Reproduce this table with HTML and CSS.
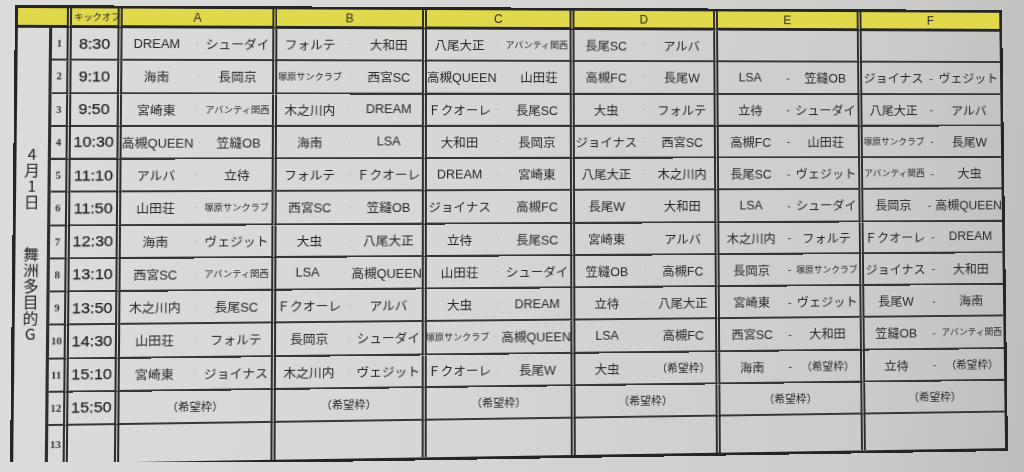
FILE: index.html
```html
<!DOCTYPE html>
<html lang="ja">
<head>
<meta charset="utf-8">
<title>試合スケジュール</title>
<link rel="stylesheet" href="styles.css">
</head>
<body>
<div class="sheet">
  <div class="c hd blank"></div>
  <div class="c hd ko">キックオフ</div>
  <div class="c hd">A</div>
  <div class="c hd">B</div>
  <div class="c hd">C</div>
  <div class="c hd">D</div>
  <div class="c hd">E</div>
  <div class="c hd f">F</div>

  <div class="c date"><span class="v">4月1日</span><span class="v">舞洲多目的G</span></div>

  <div class="c no">1</div><div class="c t">8:30</div>
  <div class="c m"><span>DREAM</span><i>·</i><span>シューダイ</span></div>
  <div class="c m"><span>フォルテ</span><i>·</i><span>大和田</span></div>
  <div class="c m"><span>八尾大正</span><i>·</i><span class="s">アバンティ関西</span></div>
  <div class="c m"><span>長尾SC</span><i>·</i><span>アルバ</span></div>
  <div class="c m e"></div>
  <div class="c m e f"></div>

  <div class="c no">2</div><div class="c t">9:10</div>
  <div class="c m"><span>海南</span><i>·</i><span>長岡京</span></div>
  <div class="c m"><span class="s">塚原サンクラブ</span><i>·</i><span>西宮SC</span></div>
  <div class="c m"><span>高槻QUEEN</span><i>·</i><span>山田荘</span></div>
  <div class="c m"><span>高槻FC</span><i>·</i><span>長尾W</span></div>
  <div class="c m e"><span>LSA</span><i>-</i><span>笠縫OB</span></div>
  <div class="c m e f"><span>ジョイナス</span><i>-</i><span>ヴェジット</span></div>

  <div class="c no">3</div><div class="c t">9:50</div>
  <div class="c m"><span>宮崎東</span><i>·</i><span class="s">アバンティ関西</span></div>
  <div class="c m"><span>木之川内</span><i>·</i><span>DREAM</span></div>
  <div class="c m"><span>Ｆクオーレ</span><i>·</i><span>長尾SC</span></div>
  <div class="c m"><span>大虫</span><i>·</i><span>フォルテ</span></div>
  <div class="c m e"><span>立待</span><i>-</i><span>シューダイ</span></div>
  <div class="c m e f"><span>八尾大正</span><i>-</i><span>アルバ</span></div>

  <div class="c no">4</div><div class="c t">10:30</div>
  <div class="c m"><span>高槻QUEEN</span><i>·</i><span>笠縫OB</span></div>
  <div class="c m"><span>海南</span><i>·</i><span>LSA</span></div>
  <div class="c m"><span>大和田</span><i>·</i><span>長岡京</span></div>
  <div class="c m"><span>ジョイナス</span><i>·</i><span>西宮SC</span></div>
  <div class="c m e"><span>高槻FC</span><i>-</i><span>山田荘</span></div>
  <div class="c m e f"><span class="s">塚原サンクラブ</span><i>-</i><span>長尾W</span></div>

  <div class="c no">5</div><div class="c t">11:10</div>
  <div class="c m"><span>アルバ</span><i>·</i><span>立待</span></div>
  <div class="c m"><span>フォルテ</span><i>·</i><span>Ｆクオーレ</span></div>
  <div class="c m"><span>DREAM</span><i>·</i><span>宮崎東</span></div>
  <div class="c m"><span>八尾大正</span><i>·</i><span>木之川内</span></div>
  <div class="c m e"><span>長尾SC</span><i>-</i><span>ヴェジット</span></div>
  <div class="c m e f"><span class="s">アバンティ関西</span><i>-</i><span>大虫</span></div>

  <div class="c no">6</div><div class="c t">11:50</div>
  <div class="c m"><span>山田荘</span><i>·</i><span class="s">塚原サンクラブ</span></div>
  <div class="c m"><span>西宮SC</span><i>·</i><span>笠縫OB</span></div>
  <div class="c m"><span>ジョイナス</span><i>·</i><span>高槻FC</span></div>
  <div class="c m"><span>長尾W</span><i>·</i><span>大和田</span></div>
  <div class="c m e"><span>LSA</span><i>-</i><span>シューダイ</span></div>
  <div class="c m e f"><span>長岡京</span><i>-</i><span>高槻QUEEN</span></div>

  <div class="c no">7</div><div class="c t">12:30</div>
  <div class="c m"><span>海南</span><i>·</i><span>ヴェジット</span></div>
  <div class="c m"><span>大虫</span><i>·</i><span>八尾大正</span></div>
  <div class="c m"><span>立待</span><i>·</i><span>長尾SC</span></div>
  <div class="c m"><span>宮崎東</span><i>·</i><span>アルバ</span></div>
  <div class="c m e"><span>木之川内</span><i>-</i><span>フォルテ</span></div>
  <div class="c m e f"><span>Ｆクオーレ</span><i>-</i><span>DREAM</span></div>

  <div class="c no">8</div><div class="c t">13:10</div>
  <div class="c m"><span>西宮SC</span><i>·</i><span class="s">アバンティ関西</span></div>
  <div class="c m"><span>LSA</span><i>·</i><span>高槻QUEEN</span></div>
  <div class="c m"><span>山田荘</span><i>·</i><span>シューダイ</span></div>
  <div class="c m"><span>笠縫OB</span><i>·</i><span>高槻FC</span></div>
  <div class="c m e"><span>長岡京</span><i>-</i><span class="s">塚原サンクラブ</span></div>
  <div class="c m e f"><span>ジョイナス</span><i>-</i><span>大和田</span></div>

  <div class="c no">9</div><div class="c t">13:50</div>
  <div class="c m"><span>木之川内</span><i>·</i><span>長尾SC</span></div>
  <div class="c m"><span>Ｆクオーレ</span><i>·</i><span>アルバ</span></div>
  <div class="c m"><span>大虫</span><i>·</i><span>DREAM</span></div>
  <div class="c m"><span>立待</span><i>·</i><span>八尾大正</span></div>
  <div class="c m e"><span>宮崎東</span><i>-</i><span>ヴェジット</span></div>
  <div class="c m e f"><span>長尾W</span><i>-</i><span>海南</span></div>

  <div class="c no">10</div><div class="c t">14:30</div>
  <div class="c m"><span>山田荘</span><i>·</i><span>フォルテ</span></div>
  <div class="c m"><span>長岡京</span><i>·</i><span>シューダイ</span></div>
  <div class="c m"><span class="s">塚原サンクラブ</span><i>·</i><span>高槻QUEEN</span></div>
  <div class="c m"><span>LSA</span><i>·</i><span>高槻FC</span></div>
  <div class="c m e"><span>西宮SC</span><i>-</i><span>大和田</span></div>
  <div class="c m e f"><span>笠縫OB</span><i>-</i><span class="s">アバンティ関西</span></div>

  <div class="c no">11</div><div class="c t">15:10</div>
  <div class="c m"><span>宮崎東</span><i>·</i><span>ジョイナス</span></div>
  <div class="c m"><span>木之川内</span><i>·</i><span>ヴェジット</span></div>
  <div class="c m"><span>Ｆクオーレ</span><i>·</i><span>長尾W</span></div>
  <div class="c m"><span>大虫</span><i>·</i><span class="w">（希望枠）</span></div>
  <div class="c m e"><span>海南</span><i>-</i><span class="w">（希望枠）</span></div>
  <div class="c m e f"><span>立待</span><i>-</i><span class="w">（希望枠）</span></div>

  <div class="c no">12</div><div class="c t">15:50</div>
  <div class="c w">（希望枠）</div>
  <div class="c w">（希望枠）</div>
  <div class="c w">（希望枠）</div>
  <div class="c w">（希望枠）</div>
  <div class="c w">（希望枠）</div>
  <div class="c w f">（希望枠）</div>

  <div class="c no last">13</div><div class="c t last"></div>
  <div class="c last"></div>
  <div class="c last"></div>
  <div class="c last"></div>
  <div class="c last"></div>
  <div class="c last"></div>
  <div class="c last f"></div>
</div>
</body>
</html>
```

FILE: styles.css
```css
html {
  height: 100%;
  overflow: hidden;
  background: linear-gradient(96deg, #dcdcda 0%, #d6d6d4 45%, #cbcbc9 85%, #bdbdbb 100%);
}

body {
  margin: 0;
  font-family: "Liberation Sans", "Noto Sans CJK JP", sans-serif;
  color: #262626;
}

.sheet {
  display: grid;
  width: 986px;
  grid-template-columns: 33px 19px 49px 150.5px 148.5px 147.5px 146.5px 147.5px 144.5px;
  grid-template-rows: 20px repeat(12, 33.25px) 37px;
  border: 3px solid #252525;
  transform-origin: 0 0;
  transform: matrix3d(1.042644, 0.005516, 0, 0.00004759,
                      -0.011067, 0.988572, 0, -0.00002447,
                      0, 0, 1, 0,
                      15, 5, 0, 1);
}

.c {
  box-sizing: border-box;
  min-width: 0;
  display: flex;
  align-items: center;
  justify-content: center;
  white-space: nowrap;
  overflow: hidden;
  border-right: 5px double #2e2e2e;
  border-bottom: 2px solid #363636;
  font-size: 12.5px;
}

.f { border-right: 0; }
.last { border-bottom: 0; }

.hd {
  background: #e0d94c;
  border-bottom: 3px solid #262626;
  font-size: 12px;
  color: #2a2a2a;
}

.blank { grid-column: span 2; }

.ko {
  justify-content: flex-start;
  font-family: "Noto Sans CJK JP", sans-serif;
  font-size: 9px;
  letter-spacing: -0.1px;
  padding-left: 2px;
}

.date {
  grid-column: 1;
  grid-row: 2 / span 13;
  border-right: 3px solid #2e2e2e;
  border-bottom: 0;
  flex-direction: column;
  gap: 36px;
  font-family: "Noto Sans CJK JP", sans-serif;
  font-size: 15px;
  color: #222;
}

.v {
  writing-mode: vertical-rl;
  text-orientation: upright;
  letter-spacing: 1px;
  line-height: 1;
}

.no {
  font-family: "Liberation Serif", serif;
  font-weight: bold;
  font-size: 10.5px;
  color: #333;
}

.t {
  font-size: 15.5px;
  color: #1f1f1f;
  -webkit-text-stroke: 0.25px #1f1f1f;
}

.m {
  display: grid;
  grid-template-columns: 1fr 12px 1fr;
  align-items: center;
}

.m span {
  text-align: center;
  white-space: nowrap;
}

.m i {
  font-style: normal;
  text-align: center;
  color: #a9a9a7;
  font-size: 10px;
}

.m.e i {
  color: #333;
  font-size: 11px;
}

.s {
  font-size: 9px;
}

.w {
  font-family: "Noto Sans CJK JP", sans-serif;
  font-size: 11px;
}
```
